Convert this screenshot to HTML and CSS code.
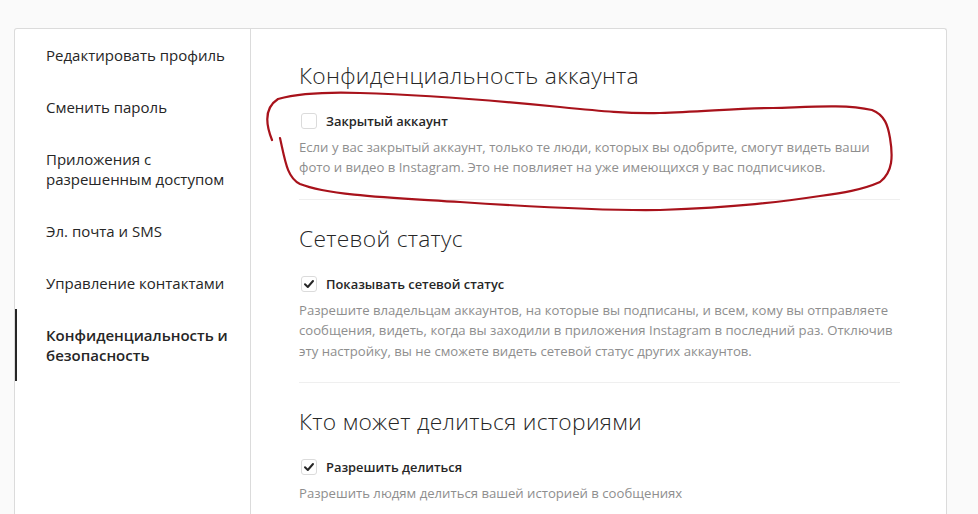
FILE: index.html
```html
<!DOCTYPE html>
<html lang="ru">
<head>
<meta charset="utf-8">
<title>Конфиденциальность и безопасность</title>
<link rel="stylesheet" href="styles.css">
</head>
<body>
<div class="page">
  <div class="card">
    <nav class="side">
      <a class="item">Редактировать профиль</a>
      <a class="item">Сменить пароль</a>
      <a class="item">Приложения с<br>разрешенным доступом</a>
      <a class="item">Эл. почта и SMS</a>
      <a class="item">Управление контактами</a>
      <a class="item active">Конфиденциальность и<br>безопасность</a>
    </nav>
    <main class="main">
      <section class="sec">
        <h2 class="title">Конфиденциальность аккаунта</h2>
        <label class="check"><span class="box"></span><span class="label">Закрытый аккаунт</span></label>
        <p class="desc">Если у вас закрытый аккаунт, только те люди, которых вы одобрите, смогут видеть ваши<br>фото и видео в Instagram. Это не повлияет на уже имеющихся у вас подписчиков.</p>
      </section>
      <section class="sec">
        <h2 class="title">Сетевой статус</h2>
        <label class="check"><span class="box checked"><svg viewBox="0 0 16 16" width="16" height="16"><polyline points="4,8.3 6.8,11 12,5" fill="none" stroke="#262626" stroke-width="2" stroke-linecap="round" stroke-linejoin="round"/></svg></span><span class="label">Показывать сетевой статус</span></label>
        <p class="desc">Разрешите владельцам аккаунтов, на которые вы подписаны, и всем, кому вы отправляете<br>сообщения, видеть, когда вы заходили в приложения Instagram в последний раз. Отключив<br>эту настройку, вы не сможете видеть сетевой статус других аккаунтов.</p>
      </section>
      <section class="sec">
        <h2 class="title">Кто может делиться историями</h2>
        <label class="check"><span class="box checked"><svg viewBox="0 0 16 16" width="16" height="16"><polyline points="4,8.3 6.8,11 12,5" fill="none" stroke="#262626" stroke-width="2" stroke-linecap="round" stroke-linejoin="round"/></svg></span><span class="label">Разрешить делиться</span></label>
        <p class="desc">Разрешить людям делиться вашей историей в сообщениях</p>
      </section>
    </main>
  </div>
</div>
<svg class="annot" viewBox="0 0 978 514" width="978" height="514">
  <path d="M280,138 C285,160 287,178 300,184 C330,196 400,198 460,202 C520,206 600,211 660,210 C740,207 780,202 820,196 C842,193 862,190 880,182 C893,172 893,156 890,138 C888,126 885,115 872,110 C845,104 810,107 773,108 C740,108 700,112 660,113 C630,114 600,111 560,107 C500,101 430,95 360,93 C330,92 300,93 278,99 C264,108 266,125 272,140" fill="none" stroke="#a8121b" stroke-width="2.2" stroke-linecap="round" stroke-linejoin="round"/>
</svg>
</body>
</html>
```

FILE: styles.css
```css
* { box-sizing: border-box; }
html, body { margin: 0; padding: 0; }
body {
  background: #fafafa;
  font-family: "Open Sans", "Noto Sans", sans-serif;
  color: #262626;
  overflow: hidden;
}
.page {
  padding: 28px 31px 0 14px;
}
.card {
  display: flex;
  background: #fff;
  border: 1px solid #dbdbdb;
  border-bottom: none;
  border-radius: 3px 3px 0 0;
  min-height: 520px;
}
.side {
  width: 236px;
  flex: none;
  border-right: 1px solid #dbdbdb;
  display: flex;
  flex-direction: column;
}
.item {
  display: block;
  padding: 16px 16px 16px 29px;
  border-left: 2px solid transparent;
  font-size: 15px;
  line-height: 20px;
  color: #262626;
}
.item.active {
  border-left-color: #262626;
  font-weight: 600;
}
.main {
  flex: 1;
  min-width: 0;
  padding: 8px 46px 0 48px;
}
.sec {
  padding: 26px 0 21px;
  border-bottom: 1px solid #efefef;
}
.title {
  margin: 0 0 22px;
  font-size: 22.8px;
  line-height: 26px;
  font-weight: 300;
  letter-spacing: 0.3px;
  color: #262626;
}
.check {
  display: flex;
  align-items: center;
  gap: 9px;
  margin: 0 0 6px 2px;
  line-height: 20px;
}
.box {
  width: 16px;
  height: 16px;
  border: 1px solid #dbdbdb;
  border-radius: 3px;
  display: flex;
  align-items: center;
  justify-content: center;
  flex: none;
}
.box svg { display: block; margin: -1px; }
.label {
  font-size: 12.9px;
  font-weight: 600;
  color: #262626;
}
.desc {
  margin: 0;
  font-size: 13.15px;
  line-height: 20.4px;
  color: #8e8e8e;
  white-space: nowrap;
}
.annot {
  position: absolute;
  left: 0;
  top: 0;
  pointer-events: none;
}
```
